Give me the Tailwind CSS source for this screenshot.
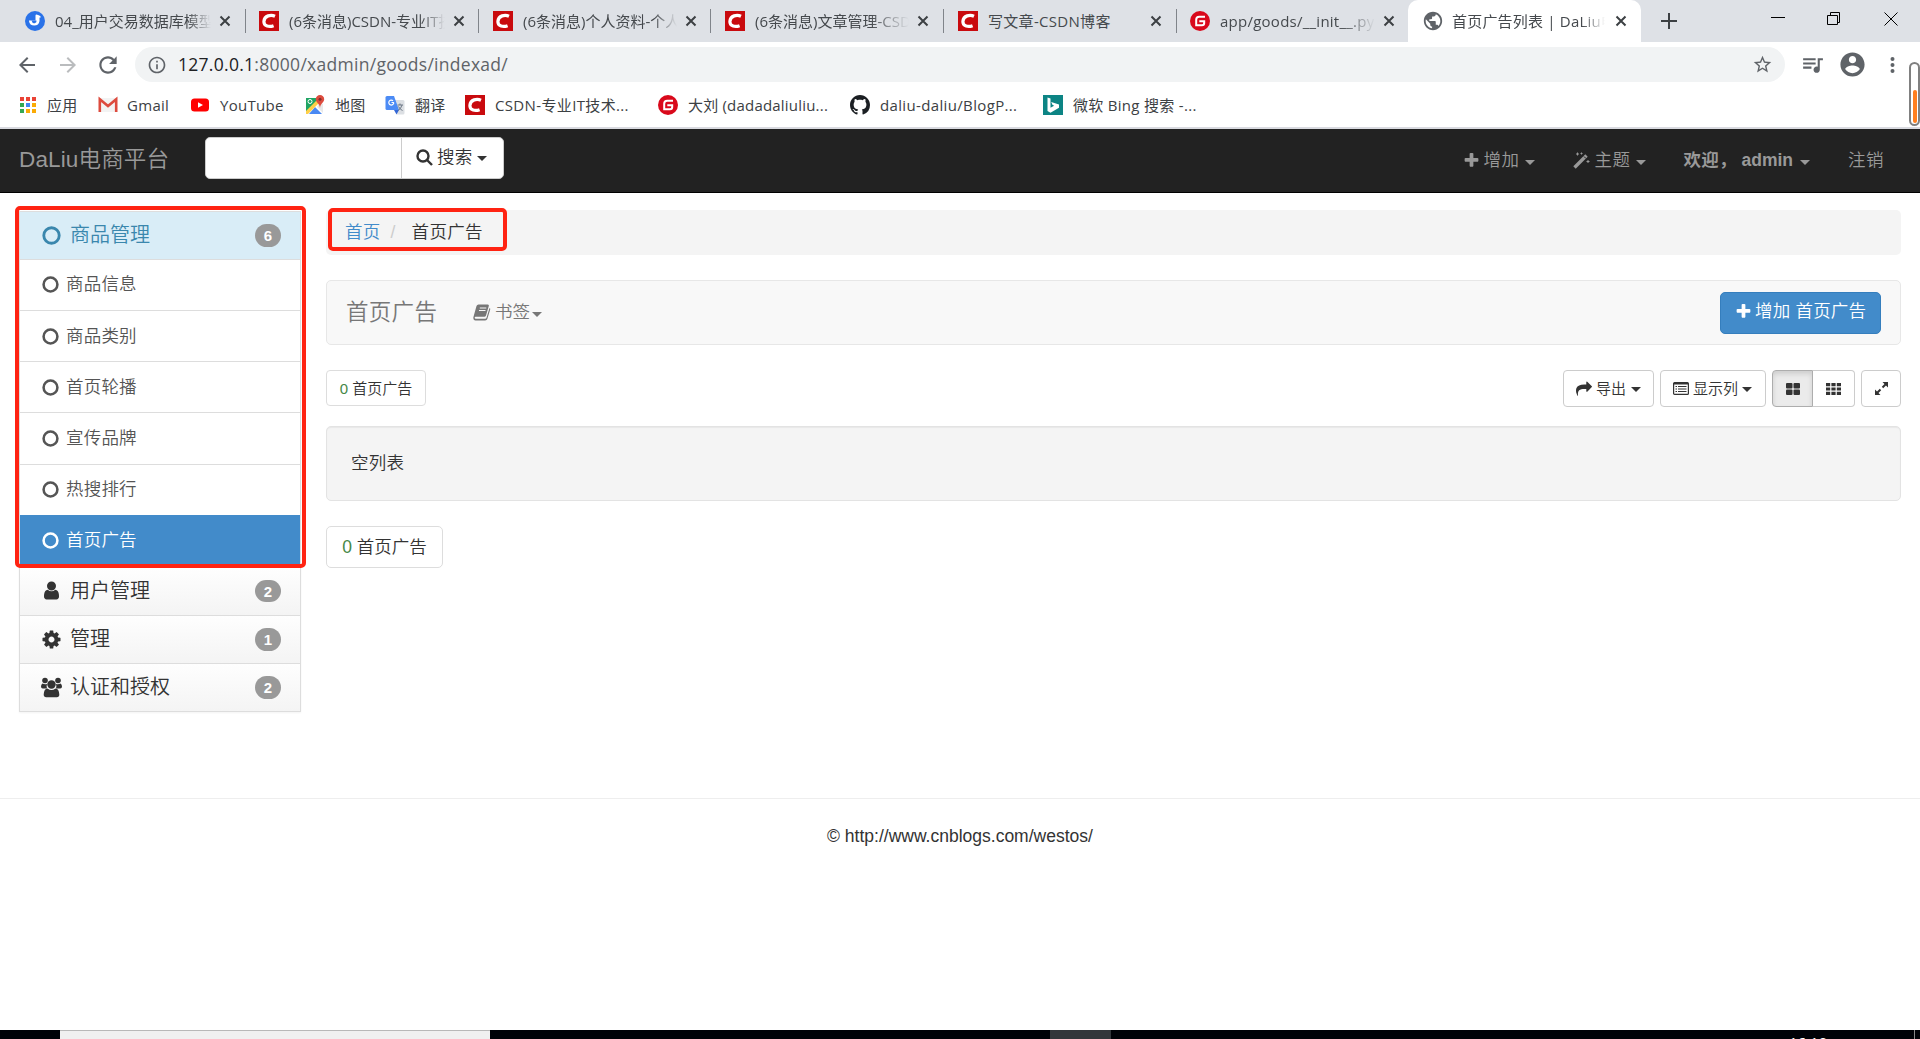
<!DOCTYPE html>
<html lang="zh-CN" dir="ltr">
<head>
    <meta charset="UTF-8">
    <meta name="viewport" content="width=device-width, initial-scale=1.0">
    <title>首页广告列表 | DaLiu电商平台</title>
    <script src="https://cdn.jsdelivr.net/npm/@tailwindcss/browser@4"></script>
</head>
<body class="relative flex h-[1039px] w-[1920px] flex-col overflow-hidden bg-white font-['Liberation_Sans','Noto_Sans_CJK_SC',sans-serif] text-[17.5px] leading-[25px] font-[350] text-[#333]">
    <svg class="hidden">
        <symbol id="csdn" viewBox="0 0 20 20"><rect width="20" height="20" fill="#c90a0e"/><path d="M16 5.200C12 3.400 5.400 4.400 4.900 10.400C4.600 15.500 10.500 16.200 14.600 14.700" fill="none" stroke="#fff" stroke-width="3.200"/></symbol>
        <symbol id="gitee" viewBox="0 0 20 20"><circle cx="10" cy="10" r="10" fill="#d9091b"/><path d="M15 5.800H9.200Q6.200 5.800 6.200 8.800V14.200H12Q14.200 14.200 14.200 12V10.200H9.300" fill="none" stroke="#fff" stroke-width="2"/></symbol>
        <symbol id="close" viewBox="0 0 12 12"><path d="M1.500 1.500l9 9M10.500 1.500l-9 9" stroke="#3c4043" stroke-width="2"/></symbol>
        <symbol id="ring" viewBox="0 0 16 16"><circle cx="8" cy="8" r="6.500" fill="none" stroke="currentColor" stroke-width="2.400"/></symbol>
        <symbol id="caret" viewBox="0 0 10 5"><path d="M0 0h10L5 5z" fill="currentColor"/></symbol>
        <symbol id="plus" viewBox="128 128 1536 1536"><path fill="currentColor" d="M1600 736v192q0 40-28 68t-68 28h-416v416q0 40-28 68t-68 28h-192q-40 0-68-28t-28-68v-416h-416q-40 0-68-28t-28-68v-192q0-40 28-68t68-28h416v-416q0-40 28-68t68-28h192q40 0 68 28t28 68v416h416q40 0 68 28t28 68z"/></symbol>
    </svg>

    <!-- tab strip -->
    <div class="flex h-[42px] shrink-0 bg-[#dee1e6] pl-3 font-['Open_Sans','Noto_Sans_CJK_SC',sans-serif] text-[15px] font-normal text-[#45494d]">
        <div class="flex w-[233px] items-center pl-[13px]">
            <svg class="size-5 shrink-0" viewBox="0 0 20 20"><circle cx="10" cy="10" r="10" fill="#2a72e8"/><path d="M4 9.500h6.500V4.500q0-1 1-1 2.500.5 4 1.800v1.500l-1-.3V10a5.300 5.300 0 0 1-10.500 0z" fill="#fff"/><path d="M6.500 9.500h5a2.300 2.300 0 0 1-4.500 1z" fill="#2a72e8"/></svg>
            <span class="ml-[10px] w-[156px] overflow-hidden whitespace-nowrap [mask-image:linear-gradient(to_right,#000_85%,transparent)]">04_用户交易数据库模型</span>
            <svg class="ml-[8px] size-3"><use href="#close"/></svg>
        </div>
        <div class="flex w-[233px] items-center">
            <i class="h-6 w-px bg-[#80848a]"></i>
            <svg class="ml-[13px] size-5 shrink-0"><use href="#csdn"/></svg>
            <span class="ml-[10px] w-[156px] overflow-hidden whitespace-nowrap [mask-image:linear-gradient(to_right,#000_85%,transparent)]">(6条消息)CSDN-专业IT技术</span>
            <svg class="ml-[8px] size-3"><use href="#close"/></svg>
        </div>
        <div class="flex w-[232px] items-center">
            <i class="h-6 w-px bg-[#80848a]"></i>
            <svg class="ml-[14px] size-5 shrink-0"><use href="#csdn"/></svg>
            <span class="ml-[10px] w-[154px] overflow-hidden whitespace-nowrap [mask-image:linear-gradient(to_right,#000_85%,transparent)]">(6条消息)个人资料-个人中心</span>
            <svg class="ml-[8px] size-3"><use href="#close"/></svg>
        </div>
        <div class="flex w-[233px] items-center">
            <i class="h-6 w-px bg-[#80848a]"></i>
            <svg class="ml-[14px] size-5 shrink-0"><use href="#csdn"/></svg>
            <span class="ml-[10px] w-[154px] overflow-hidden whitespace-nowrap [mask-image:linear-gradient(to_right,#000_75%,transparent)]">(6条消息)文章管理-CSDN</span>
            <svg class="ml-[8px] size-3"><use href="#close"/></svg>
        </div>
        <div class="flex w-[233px] items-center">
            <i class="h-6 w-px bg-[#80848a]"></i>
            <svg class="ml-[14px] size-5 shrink-0"><use href="#csdn"/></svg>
            <span class="ml-[10px] w-[154px] overflow-hidden tracking-[.3px] whitespace-nowrap">写文章-CSDN博客</span>
            <svg class="ml-[8px] size-3"><use href="#close"/></svg>
        </div>
        <div class="flex w-[232px] items-center">
            <i class="h-6 w-px bg-[#80848a]"></i>
            <svg class="ml-[13px] size-5 shrink-0"><use href="#gitee"/></svg>
            <span class="ml-[10px] w-[155px] overflow-hidden tracking-[.25px] whitespace-nowrap [mask-image:linear-gradient(to_right,#000_80%,transparent)]">app/goods/__init__.py · 大刘</span>
            <svg class="ml-[8px] size-3"><use href="#close"/></svg>
        </div>
        <div class="flex w-[233px] items-center rounded-t-[10px] bg-white pl-[14px]">
            <svg class="size-[22px] shrink-0" viewBox="0 0 24 24"><path fill="#5f6368" d="M12 2C6.480 2 2 6.480 2 12s4.480 10 10 10 10-4.480 10-10S17.520 2 12 2zm-1 17.930c-3.950-.49-7-3.850-7-7.930 0-.62.08-1.210.21-1.790L9 15v1c0 1.100.9 2 2 2v1.930zm6.900-2.540c-.26-.81-1-1.390-1.900-1.390h-1v-3c0-.55-.45-1-1-1H8v-2h2c.55 0 1-.45 1-1V7h2c1.100 0 2-.9 2-2v-.41c2.930 1.190 5 4.060 5 7.410 0 2.080-.8 3.970-2.100 5.390z"/></svg>
            <span class="ml-[8px] w-[153px] overflow-hidden tracking-[.2px] whitespace-nowrap [mask-image:linear-gradient(to_right,#000_85%,transparent)]">首页广告列表 | DaLiu电商</span>
            <svg class="ml-[10px] size-3"><use href="#close"/></svg>
        </div>
        <svg class="mt-[13px] ml-[20px] size-4" viewBox="0 0 16 16"><path d="M8 0v16M0 8h16" stroke="#3c4043" stroke-width="2"/></svg>
        <div class="mt-[12px] ml-auto flex pr-[22px] text-black">
            <svg class="mr-[42px] h-[13px] w-[14px]" viewBox="0 0 14 13"><path d="M0 5.500h14" stroke="currentColor"/></svg>
            <svg class="mr-[43px] size-[14px]" viewBox="0 0 14 14" fill="none" stroke="currentColor"><path d="M.5 3.500h10v9H.5zM3.500 3.500v-3h9v10h-2"/></svg>
            <svg class="size-[14px]" viewBox="0 0 14 14"><path d="M.5.5l13 13M13.500.5l-13 13" stroke="currentColor"/></svg>
        </div>
    </div>

    <!-- address bar -->
    <div class="flex h-[45px] shrink-0 items-center pl-[15px] font-['Open_Sans','Noto_Sans_CJK_SC',sans-serif] font-normal text-[#5f6368]">
        <svg class="size-6" viewBox="0 0 24 24" fill="#5f6368"><path d="M20 11H7.830l5.590-5.590L12 4l-8 8 8 8 1.410-1.410L7.830 13H20v-2z"/></svg>
        <svg class="ml-[17px] size-6 rotate-180" viewBox="0 0 24 24" fill="#babcbe"><path d="M20 11H7.830l5.590-5.590L12 4l-8 8 8 8 1.410-1.410L7.830 13H20v-2z"/></svg>
        <svg class="ml-[15px] size-[26px]" viewBox="0 0 24 24" fill="#5f6368"><path d="M17.650 6.350C16.200 4.900 14.210 4 12 4c-4.420 0-7.990 3.580-7.990 8s3.570 8 7.990 8c3.730 0 6.840-2.550 7.730-6h-2.080c-.82 2.330-3.040 4-5.650 4-3.310 0-6-2.690-6-6s2.690-6 6-6c1.660 0 3.140.69 4.220 1.780L13 11h7V4l-2.350 2.350z"/></svg>
        <div class="ml-[14px] flex h-[35px] w-[1650px] items-center rounded-full bg-[#f1f3f4] pr-[12px] pl-[12px]">
            <svg class="size-5" viewBox="0 0 24 24" fill="#5f6368"><path d="M11 7h2v2h-2zm0 4h2v6h-2zm1-9C6.480 2 2 6.480 2 12s4.480 10 10 10 10-4.480 10-10S17.520 2 12 2zm0 18c-4.410 0-8-3.590-8-8s3.590-8 8-8 8 3.590 8 8-3.590 8-8 8z"/></svg>
            <span class="ml-[11px] tracking-[.28px]"><span class="text-[#202124]">127.0.0.1</span>:8000/xadmin/goods/indexad/</span>
            <svg class="ml-auto size-[21px]" viewBox="0 0 24 24" fill="#5f6368"><path d="M22 9.240l-7.190-.62L12 2 9.190 8.630 2 9.240l5.460 4.730L5.820 21 12 17.270 18.180 21l-1.630-7.030L22 9.240zM12 15.400l-3.760 2.270 1-4.280-3.320-2.880 4.380-.38L12 6.100l1.710 4.040 4.380.38-3.320 2.880 1 4.280L12 15.400z"/></svg>
        </div>
        <svg class="ml-[15px] size-[25px]" viewBox="0 0 24 24" fill="#5f6368"><path d="M15 6H3v2h12V6zm0 4H3v2h12v-2zM3 16h8v-2H3v2zM17 6v8.180c-.31-.11-.65-.18-1-.18-1.660 0-3 1.340-3 3s1.340 3 3 3 3-1.340 3-3V8h3V6h-5z"/></svg>
        <svg class="ml-[13px] size-[29px]" viewBox="0 0 24 24" fill="#5f6368"><path d="M12 2C6.480 2 2 6.480 2 12s4.480 10 10 10 10-4.480 10-10S17.520 2 12 2zm0 3c1.660 0 3 1.340 3 3s-1.340 3-3 3-3-1.340-3-3 1.340-3 3-3zm0 14.200c-2.500 0-4.710-1.280-6-3.220.03-1.990 4-3.080 6-3.080 1.990 0 5.970 1.090 6 3.080-1.290 1.940-3.500 3.220-6 3.220z"/></svg>
        <svg class="ml-[23px] h-[18px] w-[5px]" viewBox="0 0 5 18" fill="#5f6368"><circle cx="2.500" cy="3" r="2"/><circle cx="2.500" cy="9" r="2"/><circle cx="2.500" cy="15" r="2"/></svg>
    </div>

    <!-- bookmarks -->
    <div class="flex h-[42px] shrink-0 items-center border-b-2 border-[#d9dae0] pb-[4px] pl-[18px] font-['Open_Sans','Noto_Sans_CJK_SC',sans-serif] text-[15px] font-normal tracking-[.3px] whitespace-nowrap text-[#3c4043]">
        <div class="flex w-[80px] items-center gap-[9px]">
            <svg class="size-5" viewBox="0 0 20 20"><g fill="#ea4335"><path d="M2 2h4v4H2zM8 2h4v4H8zM14 2h4v4h-4z"/></g><path fill="#34a853" d="M2 8h4v4H2z"/><path fill="#4285f4" d="M8 8h4v4H8z"/><path fill="#fbab05" d="M14 8h4v4h-4zM8 14h4v4H8zM14 14h4v4h-4z"/><path fill="#34a853" d="M2 14h4v4H2z"/></svg>
            <span>应用</span>
        </div>
        <div class="flex w-[92px] items-center gap-[9px]">
            <svg class="size-5" viewBox="0 0 20 20"><path fill="#f3f3f3" d="M1 3h18v14H1z"/><path fill="none" stroke="#dd4b3e" stroke-width="2.600" d="M1.800 17V4.300L10 11l8.200-6.700V17"/></svg>
            <span>Gmail</span>
        </div>
        <div class="flex w-[115px] items-center gap-[10px]">
            <svg class="size-5" viewBox="0 0 20 20"><rect x="1" y="3.500" width="18" height="13" rx="3.500" fill="#f00"/><path fill="#fff" d="M8 7.200l5 2.800-5 2.800z"/></svg>
            <span>YouTube</span>
        </div>
        <div class="flex w-[80px] items-center gap-[10px]">
            <svg class="size-5" viewBox="0 0 20 20"><path fill="#1fa463" d="M1 3h15L1 18z"/><path fill="#e8e8e8" d="M15 7l3 2v9l-6-6z"/><path fill="#4a89f3" d="M4 19l6-7 7 7z"/><path fill="#ffcf48" d="M1 16L13 4l2 3L3 19H1z"/><path fill="#dd4b3e" d="M15 0a4.200 4.200 0 0 1 4.200 4.200C19.200 7.500 15.500 8 15 13c-.5-5-4.200-5.500-4.200-8.800A4.200 4.200 0 0 1 15 0z"/><circle cx="15" cy="4.200" r="1.500" fill="#822f2b"/><circle cx="5" cy="6.500" r="2" fill="none" stroke="#fff"/></svg>
            <span>地图</span>
        </div>
        <div class="flex w-[80px] items-center gap-[10px]">
            <svg class="size-5" viewBox="0 0 20 20"><path fill="#dcdfe3" d="M8 5h10q1.500 0 1.500 1.500V18q0 1.500-1.500 1.500h-6z"/><path fill="#4c8bf5" d="M2 1h7l5 14H2Q.5 15 .5 13.500v-11Q.5 1 2 1z"/><path fill="#3367d6" d="M9 15h5l-2.500 4.500z"/><path d="M9 7.500H6.500M8 5.700a2.500 2.500 0 1 0 .8 2" fill="none" stroke="#fff" stroke-width="1.200"/><path d="M12.500 10h5.500M15 8.500V10m2 0q-1 4-4 5.500m.5-4q1.500 3 4 4" fill="none" stroke="#6c7785"/></svg>
            <span>翻译</span>
        </div>
        <div class="flex w-[193px] items-center gap-[10px]">
            <svg class="size-5"><use href="#csdn"/></svg>
            <span class="tracking-[.35px]">CSDN-专业IT技术...</span>
        </div>
        <div class="flex w-[192px] items-center gap-[10px]">
            <svg class="size-5"><use href="#gitee"/></svg>
            <span class="tracking-[.2px]">大刘 (dadadaliuliu...</span>
        </div>
        <div class="flex w-[193px] items-center gap-[10px]">
            <svg class="size-5" viewBox="0 0 16 16" fill="#1b1f23"><path d="M8 0C3.580 0 0 3.580 0 8c0 3.540 2.290 6.530 5.470 7.590.4.07.55-.17.55-.38 0-.19-.01-.82-.01-1.490-2.010.37-2.530-.49-2.690-.94-.09-.23-.48-.94-.82-1.130-.28-.15-.68-.52-.01-.53.63-.01 1.080.58 1.230.82.72 1.210 1.870.87 2.330.66.07-.52.28-.87.51-1.070-1.780-.2-3.640-.89-3.640-3.950 0-.87.31-1.590.82-2.150-.08-.2-.36-1.020.08-2.120 0 0 .67-.21 2.200.82.64-.18 1.320-.27 2-.27s1.360.09 2 .27c1.530-1.040 2.200-.82 2.200-.82.44 1.100.16 1.920.08 2.120.51.56.82 1.270.82 2.150 0 3.070-1.870 3.750-3.650 3.950.29.25.54.73.54 1.480 0 1.070-.01 1.930-.01 2.200 0 .21.15.46.55.38A8.010 8.010 0 0016 8c0-4.420-3.580-8-8-8z"/></svg>
            <span class="tracking-[.35px]">daliu-daliu/BlogP...</span>
        </div>
        <div class="flex items-center gap-[10px]">
            <svg class="size-5" viewBox="0 0 20 20"><path fill="#0c8484" d="M0 0h20v20H0z"/><path fill="#fff" d="M4.500 2.500l3 1v9.300l3.600-2.100-1.700-.9-1.200-2.800L16 9.400v3.300l-8.500 5-3-1.700z"/></svg>
            <span>微软 Bing 搜索 -...</span>
        </div>
    </div>

    <!-- site navbar -->
    <nav class="flex h-16 shrink-0 items-center border-b border-black bg-[#222] pr-[36px] pl-[19px] text-[#999]">
        <a class="w-[186px] pb-[2px] text-[22.5px] tracking-[.15px]">DaLiu电商平台</a>
        <div class="mb-[5px] flex h-[42px] w-[299px] overflow-hidden rounded-[5px] border border-[#ccc] bg-white text-[#333]">
            <div class="w-[196px] border-r border-[#ccc]"></div>
            <div class="flex flex-1 items-center pb-[2px] pl-[14px]">
                <svg class="size-[17px]" viewBox="0 0 17 17" fill="none" stroke="currentColor" stroke-width="2.400"><circle cx="7" cy="7" r="5.500"/><path d="M11 11l5 5"/></svg>
                <span class="ml-[4px] tracking-[.3px]">搜索</span>
                <svg class="mt-[2px] ml-[4px] h-[5px] w-[10px]"><use href="#caret"/></svg>
            </div>
        </div>
        <div class="ml-auto flex items-center pb-px">
            <svg class="size-[15px]"><use href="#plus"/></svg>
            <span class="ml-[4px] tracking-[.5px]">增加</span>
            <svg class="mt-1 ml-[6px] h-[5px] w-[10px]"><use href="#caret"/></svg>
            <svg class="ml-[38px] size-[17px]" viewBox="0 0 17 17"><path d="M1.500 15.500L13.500 3.500" stroke="currentColor" stroke-width="3.400"/><path d="M11 4.500l2 2" stroke="#222" stroke-width="1"/><path d="M4.500.5v3M3 2h3M8.500.5v2M7.500 1.500h2M15 8v3M13.500 9.500h3" stroke="currentColor" stroke-width="1"/></svg>
            <span class="ml-[4px] tracking-[.5px]">主题</span>
            <svg class="mt-1 ml-[6px] h-[5px] w-[10px]"><use href="#caret"/></svg>
            <b class="ml-[37px] w-[58px] font-bold tracking-[.3px] whitespace-nowrap">欢迎，</b>
            <b class="font-bold">admin</b>
            <svg class="mt-1 ml-[7px] h-[5px] w-[10px]"><use href="#caret"/></svg>
            <span class="ml-[38px] tracking-[.5px]">注销</span>
        </div>
    </nav>

    <div class="flex h-[605px] shrink-0 px-[19px] pt-[17px]">
        <!-- side menu -->
        <aside class="mt-px h-[501px] w-[282px] shrink-0 border border-[#ddd] shadow-xs">
            <h4 class="flex h-12 items-center border-b border-[#ddd] bg-[#d9edf7] pr-[19px] pl-[22px] text-[20px] font-[350] text-[#3a87ad]">
                <svg class="mr-[9px] size-[19px]"><use href="#ring"/></svg>商品管理
                <span class="ml-auto h-[23px] w-[26px] rounded-[12px] bg-[#999] text-center text-[15px] leading-[23px] font-bold text-white">6</span>
            </h4>
            <ul class="tracking-[.2px] text-[#555]">
                <li class="flex h-[51px] items-center border-b border-[#ddd] pb-[2px] pl-[22px]"><svg class="mr-[7px] size-[17px]"><use href="#ring"/></svg>商品信息</li>
                <li class="flex h-[51px] items-center border-b border-[#ddd] pl-[22px]"><svg class="mr-[7px] size-[17px]"><use href="#ring"/></svg>商品类别</li>
                <li class="flex h-[51px] items-center border-b border-[#ddd] pl-[22px]"><svg class="mr-[7px] size-[17px]"><use href="#ring"/></svg>首页轮播</li>
                <li class="flex h-[52px] items-center border-b border-[#ddd] pb-[1px] pl-[22px]"><svg class="mr-[7px] size-[17px]"><use href="#ring"/></svg>宣传品牌</li>
                <li class="flex h-[50px] items-center pb-[2px] pl-[22px]"><svg class="mr-[7px] size-[17px]"><use href="#ring"/></svg>热搜排行</li>
                <li class="flex h-[50px] items-center bg-[#428bca] pl-[22px] text-white"><svg class="mr-[7px] size-[17px]"><use href="#ring"/></svg>首页广告</li>
            </ul>
            <div class="pt-[3px] text-[20px]">
                <h4 class="flex h-12 items-center border-b border-[#ddd] bg-linear-to-b from-[#fefefe] to-[#f4f4f4] pr-[19px] pl-[21px] font-[350]">
                    <svg class="mr-[8px] mb-[2px] size-[21px]" viewBox="0 0 1792 1792" fill="currentColor"><path d="M1536 1399q0 109-62.500 187t-150.500 78h-854q-88 0-150.500-78t-62.500-187q0-85 8.500-160.500t31.500-152 58.500-131 94-89 134.500-34.500q131 128 313 128t313-128q76 0 134.500 34.500t94 89 58.500 131 31.500 152 8.500 160.500zm-256-887q0 159-112.500 271.500t-271.500 112.500-271.500-112.500-112.500-271.500 112.500-271.500 271.500-112.500 271.500 112.500 112.500 271.500z"/></svg>用户管理
                    <span class="mb-[2px] ml-auto h-[22px] w-[26px] rounded-[12px] bg-[#999] text-center text-[15px] leading-[23px] font-bold text-white">2</span>
                </h4>
                <h4 class="flex h-12 items-center border-b border-[#ddd] bg-linear-to-b from-[#fefefe] to-[#f4f4f4] pr-[19px] pl-[21px] font-[350]">
                    <svg class="mr-[8px] mb-[1px] size-[21px]" viewBox="0 0 1792 1792" fill="currentColor"><path d="M1152 896q0-106-75-181t-181-75-181 75-75 181 75 181 181 75 181-75 75-181zm512-109v222q0 12-8 23t-20 13l-185 28q-19 54-39 91 35 50 107 138 10 12 10 25t-9 23q-27 37-99 108t-94 71q-12 0-26-9l-138-108q-44 23-91 38-16 136-29 186-7 28-36 28h-222q-14 0-24.500-8.500t-11.500-21.500l-28-184q-49-16-90-37l-141 107q-10 9-25 9-14 0-25-11-126-114-165-168-7-10-7-23 0-12 8-23 15-21 51-66.500t54-70.500q-27-50-41-99l-183-27q-13-2-21-12.500t-8-23.500v-222q0-12 8-23t19-13l186-28q14-46 39-92-40-57-107-138-10-12-10-24 0-10 9-23 26-36 98.500-107.500t94.500-71.500q13 0 26 10l138 107q44-23 91-38 16-136 29-186 7-28 36-28h222q14 0 24.500 8.500t11.500 21.500l28 184q49 16 90 37l142-107q9-9 24-9 13 0 25 10 129 119 165 170 7 8 7 22 0 12-8 23-15 21-51 66.500t-54 70.500q26 50 41 98l183 28q13 2 21 12.500t8 23.500z"/></svg>管理
                    <span class="ml-auto h-[23px] w-[26px] rounded-[12px] bg-[#999] text-center text-[15px] leading-[23px] font-bold text-white">1</span>
                </h4>
                <h4 class="flex h-[47px] items-center bg-linear-to-b from-[#fefefe] to-[#f4f4f4] pr-[19px] pl-[21px] font-[350]">
                    <svg class="mr-[8px] mb-[1px] h-[21px] w-[21px]" viewBox="0 0 21 21" overflow="visible" fill="currentColor"><circle cx="4" cy="3.500" r="2.800"/><circle cx="17" cy="3.500" r="2.800"/><path d="M1.500 6.500q2.500 1.500 4.800.3Q5 9 6 11.500H1.800Q0 11.500 0 9.500t1.500-3zM19.500 6.500q-2.500 1.500-4.800.3Q16 9 15 11.500h4.200q1.800 0 1.800-2t-1.500-3z"/><circle cx="10.500" cy="7.500" r="4.200"/><path d="M6.500 11.500q4 3 8 0 3.500 0 3.800 6 0 2.800-2.500 2.800H5.200q-2.500 0-2.500-2.800.3-6 3.800-6z"/></svg>认证和授权
                    <span class="ml-auto h-[23px] w-[26px] rounded-[12px] bg-[#999] text-center text-[15px] leading-[23px] font-bold text-white">2</span>
                </h4>
            </div>
        </aside>

        <main class="ml-[25px] w-[1575px]">
            <div class="flex h-[45px] items-center rounded-[5px] bg-[#f4f4f4] pl-[19px]">
                <a class="tracking-[.3px] text-[#428bca]">首页</a>
                <span class="ml-[10px] w-[21px] text-[#ccc]">/</span>
                <span class="tracking-[.3px]">首页广告</span>
            </div>

            <div class="mt-[25px] flex h-[65px] items-center rounded-[5px] border border-[#e7e7e7] bg-[#f8f8f8] pr-[19px] pl-[19px] text-[#777]">
                <span class="w-[127px] text-[22.5px] tracking-[.3px]">首页广告</span>
                <svg class="h-[17px] w-[18px]" viewBox="0 0 18 17" fill="currentColor"><path d="M5.500.5h9.300q1.500 0 1 1.600L13 11.500q-.4 1.300-1.800 1.300H2.500q-.8 0-.8 1t1.200 1h9.300q1 0 1.300-1L16.500 4q1 .4.700 1.500l-2.800 9.300Q13.900 16.500 12.200 16.500H2.500Q.3 16.500.3 13.500L3.500 2Q4 .5 5.500.5z"/><path d="M6.800 4h6.500M6 6.500h6.500" stroke="#f8f8f8"/></svg>
                <span class="ml-[4px]">书签</span>
                <svg class="mt-[3px] ml-[2px] h-[5px] w-[10px]"><use href="#caret"/></svg>
                <a class="ml-auto flex h-[42px] w-[161px] items-center rounded-[5px] border border-[#357ebd] bg-[#428bca] pb-[2px] pl-[15px] tracking-[.2px] whitespace-nowrap text-white">
                    <svg class="mr-[4px] size-[15px] shrink-0"><use href="#plus"/></svg>增加 首页广告
                </a>
            </div>

            <div class="mt-[25px] flex h-[37px] text-[15px]">
                <div class="flex h-[36px] w-[100px] items-center justify-center rounded-[4px] border border-[#ddd]"><span class="mr-1 text-[#468847]">0</span>首页广告</div>
                <div class="ml-auto flex w-[91px] items-center rounded-[4px] border border-[#ccc] pl-[12px]">
                    <svg class="size-[16px]" viewBox="0 0 1792 1792" fill="currentColor"><path d="M1792 640q0 26-19 45l-512 512q-19 19-45 19t-45-19-19-45v-256h-224q-98 0-175.500 6t-154 21.500-133 42.500-105.500 69.500-80 101-48.500 138.500-17.500 181q0 55 5 123 0 6 2.500 23.500t2.500 26.500q0 15-8.500 25t-23.500 10q-16 0-28-17-7-9-13-22t-13.500-30-10.500-24q-127-285-127-451 0-199 53-333 162-403 875-403h224v-256q0-26 19-45t45-19 45 19l512 512q19 19 19 45z"/></svg>
                    <span class="ml-[4px]">导出</span>
                    <svg class="mt-[2px] ml-[5px] h-[5px] w-[10px]"><use href="#caret"/></svg>
                </div>
                <div class="ml-[6px] flex w-[106px] items-center rounded-[4px] border border-[#ccc] pl-[12px]">
                    <svg class="h-[13px] w-[16px]" viewBox="0 0 16 13"><rect x=".6" y=".6" width="14.800" height="11.800" rx="1" fill="none" stroke="currentColor" stroke-width="1.200"/><path d="M1 1.500h14" stroke="currentColor" stroke-width="2"/><path d="M2.500 4.500h1.500M2.500 7h1.500M2.500 9.500h1.500M5 4.500h8.500M5 7h8.500M5 9.500h8.500" stroke="currentColor"/></svg>
                    <span class="ml-[4px]">显示列</span>
                    <svg class="mt-[2px] ml-[4px] h-[5px] w-[10px]"><use href="#caret"/></svg>
                </div>
                <div class="ml-[6px] flex w-[83px]">
                    <div class="flex w-[41px] items-center justify-center rounded-l-[4px] border border-[#adadad] bg-[#ebebeb] inset-shadow-[0_3px_5px_rgb(0_0_0/0.125)]">
                        <svg class="h-[12px] w-[14px]" viewBox="0 0 14 12" fill="currentColor"><rect width="6.500" height="5.500" rx="1"/><rect x="7.500" width="6.500" height="5.500" rx="1"/><rect y="6.500" width="6.500" height="5.500" rx="1"/><rect x="7.500" y="6.500" width="6.500" height="5.500" rx="1"/></svg>
                    </div>
                    <div class="flex flex-1 items-center justify-center rounded-r-[4px] border border-l-0 border-[#ccc]">
                        <svg class="h-[12px] w-[15px]" viewBox="0 0 15 12" fill="currentColor"><path d="M0 0h4.200v3.200H0zM5.400 0h4.200v3.200H5.400zM10.800 0H15v3.200h-4.200zM0 4.400h4.200v3.200H0zM5.400 4.400h4.200v3.200H5.400zM10.800 4.400H15v3.200h-4.200zM0 8.800h4.200V12H0zM5.400 8.800h4.200V12H5.400zM10.800 8.800H15V12h-4.200z"/></svg>
                    </div>
                </div>
                <div class="ml-[6px] flex w-[40px] items-center justify-center rounded-[4px] border border-[#ccc]">
                    <svg class="size-[13px]" viewBox="0 0 13 13" fill="currentColor"><path d="M7.500 0H13v5.500zM0 7.500V13h5.500z"/><path d="M11 2L7.500 5.500M2 11l3.500-3.500" stroke="currentColor" stroke-width="2"/></svg>
                </div>
            </div>

            <div class="mt-[19px] flex h-[75px] items-center rounded-[5px] border border-[#e3e3e3] bg-[#f4f4f4] pl-[24px] tracking-[.3px] inset-shadow-[0_1px_1px_rgb(0_0_0/0.05)]">空列表</div>
            <div class="mt-[25px] flex h-[42px] w-[117px] items-center justify-center rounded-[5px] border border-[#ddd]"><span class="mr-[5px] text-[#468847]">0</span>首页广告</div>
        </main>
    </div>

    <footer class="flex-1 border-t border-[#eee] pt-[25px] text-center">© http://www.cnblogs.com/westos/</footer>

    <!-- top edge of the taskbar -->
    <div class="flex h-[9px] shrink-0 overflow-hidden bg-[#000207] pl-[60px] text-white">
        <div class="w-[430px] border-t border-[#b8b8b8] bg-[#f0f0f0]"></div>
        <div class="ml-[560px] w-[61px] bg-[#33373b]"></div>
        <span class="ml-[678px] pt-[5px] font-['Open_Sans',sans-serif] text-[15px] leading-[15px] font-normal">16:10</span>
        <i class="mr-[5px] ml-auto w-px bg-[#888]"></i>
    </div>

    <!-- red marker frames and the floating level gauge -->
    <div class="absolute top-[206px] left-[15px] h-[362px] w-[291px] rounded-[5px] border-4 border-[#ff2312]"></div>
    <div class="absolute top-[208px] left-[328px] h-[43px] w-[179px] rounded-[5px] border-4 border-[#ff2312]"></div>
    <div class="absolute top-[62px] left-[1909px] flex h-[64px] w-[11px] items-end rounded-full border-2 border-[#808080] bg-white p-[1.5px]">
        <i class="h-[33px] w-full rounded-full bg-[#ff7f1f]"></i>
    </div>
</body>
</html>
